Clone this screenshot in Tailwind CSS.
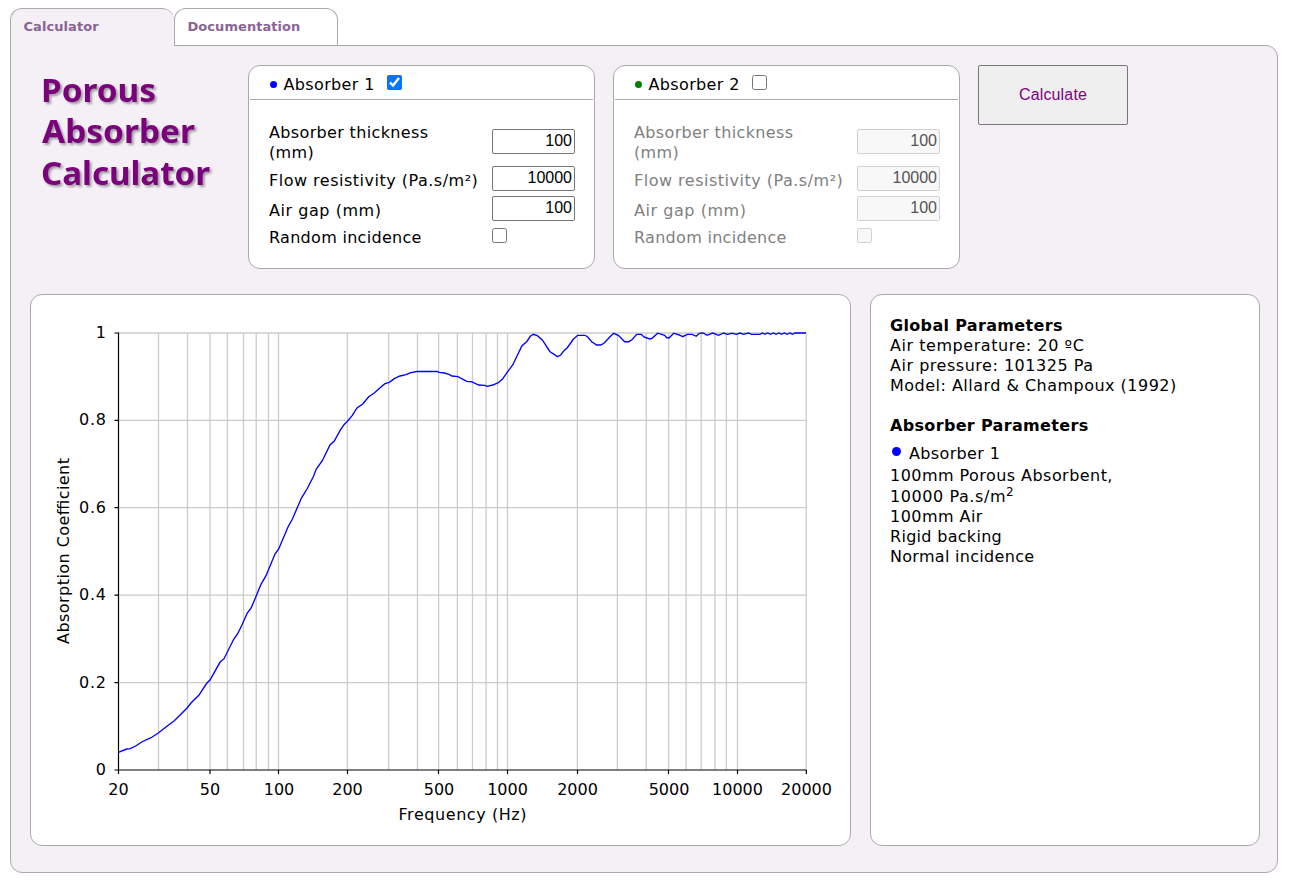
<!DOCTYPE html>
<html lang="en">

<head>
    <meta charset="UTF-8" />
    <meta name="viewport" content="width=device-width, initial-scale=1.0" />
    <title>Porous Absorber Calculator</title>
    <script src="https://cdn.jsdelivr.net/npm/@tailwindcss/browser@4"></script>
</head>

<body class="bg-white text-black font-['Verdana','DejaVu_Sans',sans-serif]">
    <div class="w-[1268px] h-[873px] ml-[10px] pt-2 flex flex-col text-base leading-5">

        <!-- Tabs -->
        <div class="flex h-[37px] text-[13px] font-bold text-[#8a6492] tracking-[0.06px]">
            <a href="#" class="w-[164px] h-[37px] pt-2 pl-[12.5px] border-l border-t border-[#aaa] rounded-t-xl bg-[#f4f0f6]">Calculator</a>
            <a href="#" class="w-[164px] h-[37px] pt-2 pl-[12.5px] border-x border-t border-[#aaa] rounded-t-xl bg-white">Documentation</a>
        </div>

        <!-- Calculator panel -->
        <div class="relative flex-1 flex flex-col border border-[#aaa] rounded-xl rounded-tl-none bg-[#f4f0f6] pt-[19px] pl-[19px]">
            <div class="absolute left-0 -top-px w-[163px] h-px bg-[#f4f0f6]"></div>
            <div class="flex h-[204px]">
                <svg class="w-[218px] h-[140px] drop-shadow-[2px_2px_1px_rgba(0,0,0,0.35)]" viewBox="30 65 218 140" font-family="Noto Sans, sans-serif" font-size="33" font-weight="700" fill="#7a007c">
                    <text x="41" y="101.5" textLength="115" lengthAdjust="spacingAndGlyphs">Porous</text>
                    <text x="42" y="143" textLength="153" lengthAdjust="spacingAndGlyphs">Absorber</text>
                    <text x="41" y="184.5" textLength="169" lengthAdjust="spacingAndGlyphs">Calculator</text>
                </svg>

                <div class="w-[347px] h-[204px] mr-[18px] bg-white border border-[#aaa] rounded-xl px-px">
                    <div class="h-[34px] pl-5 pt-2 border-b border-[#aaa] flex items-start">
                        <span class="w-[6.5px] h-[6.5px] mt-[7px] mr-[7px] rounded-full bg-[#00f]"></span>
                        <label for="absorber1" class="pt-px tracking-[0.36px]">Absorber 1</label>
                        <input id="absorber1" type="checkbox" class="w-[15px] h-[15px] ml-3 mt-px" checked />
                    </div>
                    <div class="grid grid-cols-[223px_83px] pl-[19px] pt-[22px]">
                        <label class="h-[44px] pt-px tracking-[0.35px]">Absorber thickness<br />(mm)</label>
                        <input type="text" value="100" class="h-[25px] mt-[7px] border border-[#767676] rounded-xs px-0.5 pb-0.5 text-right font-['Liberation_Sans',sans-serif]" />
                        <label class="h-[30px] pt-[5px] whitespace-nowrap tracking-[0.5px]">Flow resistivity (Pa.s/m²)</label>
                        <input type="text" value="10000" class="h-[25px] border border-[#767676] rounded-xs px-0.5 pb-0.5 text-right font-['Liberation_Sans',sans-serif]" />
                        <label class="h-[30px] pt-[5px] tracking-[0.55px]">Air gap (mm)</label>
                        <input type="text" value="100" class="h-[25px] border border-[#767676] rounded-xs px-0.5 pb-0.5 text-right font-['Liberation_Sans',sans-serif]" />
                        <label class="pt-0.5 tracking-[0.3px]">Random incidence</label>
                        <input type="checkbox" class="w-[15px] h-[15px] mt-[2px]" />
                    </div>
                </div>

                <div class="w-[347px] h-[204px] mr-[18px] bg-white border border-[#aaa] rounded-xl px-px">
                    <div class="h-[34px] pl-5 pt-2 border-b border-[#aaa] flex items-start">
                        <span class="w-[6.5px] h-[6.5px] mt-[7px] mr-[7px] rounded-full bg-[#008000]"></span>
                        <label for="absorber2" class="pt-px tracking-[0.36px]">Absorber 2</label>
                        <input id="absorber2" type="checkbox" class="w-[15px] h-[15px] ml-3 mt-px" />
                    </div>
                    <div class="grid grid-cols-[223px_83px] pl-[19px] pt-[22px] text-[#808080]">
                        <label class="h-[44px] pt-px tracking-[0.35px]">Absorber thickness<br />(mm)</label>
                        <input type="text" value="100" disabled class="h-[25px] mt-[7px] border border-[#d1d1d1] rounded-xs bg-[#f8f8f8] text-[#545454] px-0.5 pb-0.5 text-right font-['Liberation_Sans',sans-serif]" />
                        <label class="h-[30px] pt-[5px] whitespace-nowrap tracking-[0.5px]">Flow resistivity (Pa.s/m²)</label>
                        <input type="text" value="10000" disabled class="h-[25px] border border-[#d1d1d1] rounded-xs bg-[#f8f8f8] text-[#545454] px-0.5 pb-0.5 text-right font-['Liberation_Sans',sans-serif]" />
                        <label class="h-[30px] pt-[5px] tracking-[0.55px]">Air gap (mm)</label>
                        <input type="text" value="100" disabled class="h-[25px] border border-[#d1d1d1] rounded-xs bg-[#f8f8f8] text-[#545454] px-0.5 pb-0.5 text-right font-['Liberation_Sans',sans-serif]" />
                        <label class="pt-0.5 tracking-[0.3px]">Random incidence</label>
                        <input type="checkbox" disabled class="w-[15px] h-[15px] mt-[2px]" />
                    </div>
                </div>

                <button type="button" class="w-[150px] h-[60px] bg-[#efefef] border border-[#767676] rounded-xs text-[#800080] tracking-[0.15px] font-['Liberation_Sans',sans-serif]">Calculate</button>
            </div>

            <div class="flex mt-[25px]">
                <!-- Chart -->
                <div class="w-[821px] h-[552px] mr-[19px] bg-white border border-[#aaa] rounded-xl">
                    <svg class="w-[819px] h-[550px]" viewBox="31 295 819 550" fill="none" font-size="16">
                        <path stroke="#ccc" stroke-width="1.3" d="M158.5 333V770M187.5 333V770M210 333V770M227.4 333V770M243.5 333V770M256.2 333V770M268.5 333V770M278.5 333V770M347.4 333V770M388.6 333V770M417.5 333V770M438.6 333V770M457.4 333V770M472.5 333V770M486.1 333V770M497.5 333V770M507.5 333V770M577.4 333V770M617.4 333V770M646.3 333V770M668.6 333V770M686.1 333V770M701.2 333V770M715 333V770M726.4 333V770M737.5 333V770M806.2 333V770" />
                        <path stroke="#ccc" stroke-width="1.3" d="M118 333H806M118 420.4H806M118 507.7H806M118 595.2H806M118 682.6H806" />
                        <path stroke="#000" stroke-width="1.2" d="M118.5 332.5V774M114.5 333H118M114.5 420.4H118M114.5 507.7H118M114.5 595.2H118M114.5 682.6H118M114.5 770H806.5M210 770V774M278.5 770V774M347.5 770V774M438.5 770V774M507.5 770V774M577.5 770V774M668.5 770V774M737.5 770V774M806.3 770V774" />
                        <polyline stroke="#00f" stroke-width="1.35" points="118.3,752.3 126.7,749 130.3,748.7 135.7,746 141.7,742 151,737.7 158.3,733 165,727.7 174.3,720.7 187.3,707.7 191,703 199,695 206.7,683.3 210,680 220,662.3 224,658.7 233.7,639.3 237.7,633.7 242.3,624.3 247.3,613 251.3,607.7 257.3,593.3 261,584.3 266,575.7 275,554 278.7,549 288,527 292.3,519.3 301.3,498.3 307,489 313.3,476.7 316.3,469 322.3,460.7 330,445 334.3,441 340,430.7 344,424.7 347.7,421 352.3,415.3 357,408 362.7,404 368.7,396.7 374.3,393 380,387.7 385,383.7 389.3,382.3 394.3,378.7 400,376 406,374.7 410,372.8 416.7,371.5 437.3,371.5 439.3,372.3 444.3,373 449,374.3 452,376 458,376.7 466.7,381.3 472,381.9 478.7,385 484.7,385.3 487.3,386.4 492.7,385 498.3,382.7 502.3,379.3 507.7,371.7 512.7,365 522,345.7 526.7,341.7 530.3,336.3 533.3,334.3 537.3,335.7 542.3,340 550,351.7 555,354.9 557.3,356.7 560.7,355 564,350.7 567.3,347.7 573.3,339.3 577.7,335.3 585,335.3 587.7,337 591.7,341.7 596.7,345 600.7,345 604.3,343 610,336.7 613.7,333.3 618.3,335.3 624.7,341.7 628.7,341.7 631.7,340 636.7,334.3 641.3,334.3 644,337 649.7,339 652,338.3 657.7,333.2 664.7,335.3 666.7,337.7 669.3,337.7 673.7,333.2 679.3,335 682.7,336.7 687.3,334.3 692,334.3 696.3,336.3 699.3,333.3 703,333 707,335.3 712.7,333 718.7,335.3 723.7,333 727.3,334.3 732,333.3 736.5,334.3 740,333 743.3,334.3 748.7,333 751.3,334.3 760,334.3 762.5,333 765,334.3 767.5,333 770.5,334.3 773.5,333 776,334.3 779,333 781.5,334.3 784.5,333 787,334.3 790,333 792.5,334.3 795,333 806,333" />
                        <g fill="#000" text-anchor="end">
                            <text x="106" y="338">1</text>
                            <text x="106" y="425" textLength="27">0.8</text>
                            <text x="106" y="513" textLength="27">0.6</text>
                            <text x="106" y="600" textLength="27">0.4</text>
                            <text x="106" y="688" textLength="27">0.2</text>
                            <text x="106" y="775">0</text>
                        </g>
                        <g fill="#000" text-anchor="middle">
                            <text x="118.5" y="795">20</text>
                            <text x="210" y="795">50</text>
                            <text x="279" y="795">100</text>
                            <text x="347.5" y="795">200</text>
                            <text x="439" y="795">500</text>
                            <text x="507.5" y="795">1000</text>
                            <text x="577.5" y="795">2000</text>
                            <text x="669" y="795">5000</text>
                            <text x="737.5" y="795">10000</text>
                            <text x="806.5" y="795">20000</text>
                            <text x="462.5" y="820" textLength="128">Frequency (Hz)</text>
                            <text transform="translate(69 551) rotate(-90)" textLength="186">Absorption Coefficient</text>
                        </g>
                    </svg>
                </div>

                <!-- Parameters -->
                <div class="w-[390px] h-[552px] bg-white border border-[#aaa] rounded-xl pl-[19px] pt-[21px] tracking-[0.45px]">
                    <h2 class="font-bold tracking-[0.33px]">Global Parameters</h2>
                    <p class="tracking-[0.55px]">Air temperature: 20 ºC</p>
                    <p class="tracking-[0.52px]">Air pressure: 101325 Pa</p>
                    <p class="tracking-[0.48px]">Model: Allard &amp; Champoux (1992)</p>
                    <h2 class="font-bold mt-5 tracking-[0.33px]">Absorber Parameters</h2>
                    <div class="flex mt-2 mb-0.5">
                        <span class="w-[9px] h-[9px] mt-[3px] ml-[2px] mr-2 rounded-full bg-[#00f]"></span>
                        <p class="tracking-[0.36px]">Absorber 1</p>
                    </div>
                    <p>100mm Porous Absorbent,</p>
                    <p class="mt-px tracking-[0.58px]">10000 Pa.s/m<sup class="text-[12px] -top-[6px]">2</sup></p>
                    <p>100mm Air</p>
                    <p class="tracking-[0.3px]">Rigid backing</p>
                    <p class="tracking-[0.3px]">Normal incidence</p>
                </div>
            </div>
        </div>
    </div>
</body>

</html>
